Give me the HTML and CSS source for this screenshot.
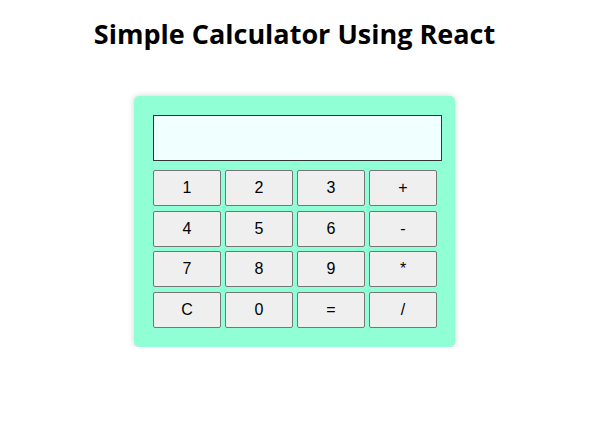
FILE: index.html
```html
<!DOCTYPE html>
<html>
<head>
<meta charset="utf-8">
<link rel="stylesheet" href="styles.css">
</head>
<body>
<div class="app">
  <h1 class="title">Simple Calculator Using React</h1>
  <div class="calculator">
    <input class="display" type="text" readonly>
    <div class="keys">
      <button class="key">1</button>
      <button class="key">2</button>
      <button class="key">3</button>
      <button class="key">+</button>
      <button class="key">4</button>
      <button class="key">5</button>
      <button class="key">6</button>
      <button class="key">-</button>
      <button class="key">7</button>
      <button class="key">8</button>
      <button class="key">9</button>
      <button class="key">*</button>
      <button class="key">C</button>
      <button class="key">0</button>
      <button class="key">=</button>
      <button class="key">/</button>
    </div>
  </div>
</div>
</body>
</html>
```

FILE: styles.css
```css
html, body {
  margin: 0;
  padding: 0;
  background: #ffffff;
}

body {
  padding: 0 11px 0 0;
}

.app {
  display: flex;
  flex-direction: column;
  align-items: center;
}

.title {
  font-family: "Open Sans", "Noto Sans", sans-serif;
  font-weight: 700;
  font-size: 27px;
  line-height: 38px;
  margin: 15px 0 43px 0;
  color: #000;
}

.calculator {
  width: 321px;
  box-sizing: border-box;
  background: #90ffd6;
  border-radius: 5px;
  box-shadow: 0 0 6px rgba(0, 0, 0, 0.18);
  padding: 19px 13px 19px 19px;
  display: flex;
  flex-direction: column;
  gap: 9px;
}

.display {
  display: block;
  width: 289px;
  height: 46px;
  box-sizing: border-box;
  border: 1px solid #333;
  background: #f0ffff;
  margin: 0;
  padding: 0;
  font-family: "Liberation Sans", Arial, sans-serif;
  font-size: 20px;
}

.keys {
  display: grid;
  grid-template-columns: repeat(4, 68px);
  grid-auto-rows: 36px;
  column-gap: 4px;
  row-gap: 4.7px;
}

.key {
  margin: 0;
  padding: 0;
  background: #efefef;
  border: 1px solid #767676;
  border-radius: 2px;
  font-family: "Liberation Sans", Arial, sans-serif;
  font-size: 16px;
  color: #000;
}
```
